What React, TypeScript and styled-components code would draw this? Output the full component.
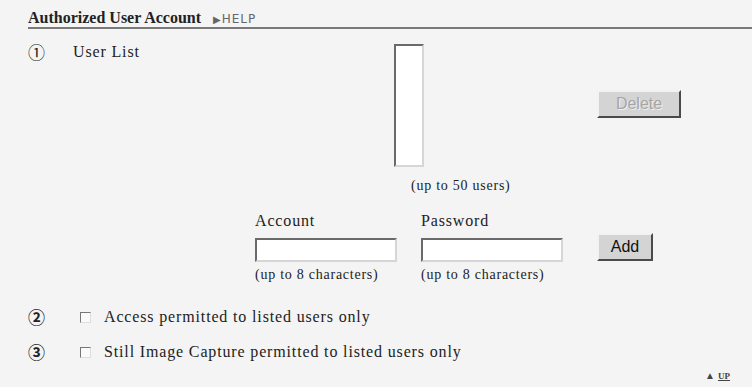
import React from "react";
import styled, { createGlobalStyle } from "styled-components";

const Global = createGlobalStyle`
  html, body { margin: 0; padding: 0; background: #f4f4f4; }
  body { font-family: "Liberation Serif", "Times New Roman", serif; color: #222; }
`;

const Page = styled.div`
  width: 752px;
  height: 387px;
  background: #f4f4f4;
  position: relative;
  overflow: hidden;
`;

const Header = styled.div`
  margin-left: 28px;
  padding-top: 9px;
  height: 18px;
  border-bottom: 2px solid #7a7a7a;
  display: flex;
  align-items: baseline;
  gap: 12px;
`;

const Title = styled.span`
  font-size: 16px;
  font-weight: bold;
  color: #222;
`;

const Help = styled.span`
  font-family: "DejaVu Sans", Verdana, sans-serif;
  font-size: 12px;
  color: #666;
  letter-spacing: 1px;
`;

const HelpArrow = styled.span`
  font-size: 10px;
  margin-right: 0px;
`;

const Row = styled.div<{ $top: number }>`
  display: flex;
  align-items: flex-start;
  margin-top: ${(p) => p.$top}px;
`;

const Num = styled.span<{ $bold?: boolean }>`
  width: 45px;
  height: 16px;
  margin-left: 28px;
  flex: none;
  font-family: "Noto Sans CJK JP", "DejaVu Sans", sans-serif;
  font-weight: ${(p) => (p.$bold ? "bold" : "normal")};
  font-size: 17px;
  line-height: 16px;
  color: #222;
`;

const Label = styled.span<{ $w: number }>`
  width: ${(p) => p.$w}px;
  flex: none;
  font-size: 16px;
  line-height: 16px;
  letter-spacing: 0.85px;
`;

const ListBox = styled.div`
  width: 26px;
  height: 119px;
  background: #fff;
  border-top: 2px solid #6a6a6a;
  border-left: 2px solid #6a6a6a;
  border-right: 2px solid #d6d6d6;
  border-bottom: 2px solid #d6d6d6;
  flex: none;
`;

const Button = styled.button<{ $disabled?: boolean; $w: number }>`
  width: ${(p) => p.$w}px;
  height: 28px;
  flex: none;
  background: #d4d4d4;
  border-top: 2px solid #f2f2f2;
  border-left: 2px solid #f2f2f2;
  border-right: 2px solid #4a4a4a;
  border-bottom: 2px solid #4a4a4a;
  font-family: "Liberation Sans", Arial, sans-serif;
  font-size: 16px;
  color: ${(p) => (p.$disabled ? "#a6a6a6" : "#111")};
  text-shadow: ${(p) => (p.$disabled ? "1px 1px 0 #f0f0f0" : "none")};
  padding: 0;
`;

const Note = styled.div<{ $left: number }>`
  margin-left: ${(p) => p.$left}px;
  font-size: 14px;
  line-height: 14px;
  letter-spacing: 0.75px;
  color: #222;
`;

const FieldCol = styled.div<{ $w: number }>`
  width: ${(p) => p.$w}px;
  flex: none;
  display: flex;
  flex-direction: column;
`;

const FieldLabel = styled.span`
  font-size: 16px;
  line-height: 16px;
  letter-spacing: 0.85px;
  height: 25px;
`;

const TextInput = styled.div`
  width: 138px;
  height: 20px;
  background: #fff;
  border-top: 2px solid #6a6a6a;
  border-left: 2px solid #6a6a6a;
  border-right: 2px solid #d6d6d6;
  border-bottom: 2px solid #d6d6d6;
`;

const SmallNote = styled.span`
  margin-top: 6px;
  font-size: 14px;
  line-height: 14px;
  letter-spacing: 0.75px;
`;

const Check = styled.span`
  width: 9px;
  height: 9px;
  margin: 3px 13px 0 7px;
  flex: none;
  background: #fafafa;
  border-top: 1px solid #777;
  border-left: 1px solid #777;
  border-right: 1px solid #ddd;
  border-bottom: 1px solid #ddd;
`;

const CheckText = styled.span`
  font-size: 16px;
  line-height: 16px;
  letter-spacing: 0.85px;
`;

const UpLink = styled.div`
  position: absolute;
  right: 22px;
  bottom: 6px;
  font-size: 10px;
  color: #444;
  display: flex;
  align-items: center;
  gap: 3px;
`;

const UpText = styled.span`
  text-decoration: underline;
  font-weight: bold;
  font-size: 9px;
`;

export default function App() {
  return (
    <Page>
      <Global />
      <Header>
        <Title>Authorized User Account</Title>
        <Help>
          <HelpArrow>▶</HelpArrow>HELP
        </Help>
      </Header>
      <Row $top={15}>
        <Num>①</Num>
        <Label $w={321}>User List</Label>
        <ListBox />
        <Button $disabled $w={84} style={{ marginLeft: 173, marginTop: 46 }}>
          Delete
        </Button>
      </Row>
      <Note $left={411} style={{ marginTop: 12 }}>(up to 50 users)</Note>
      <Row $top={20}>
        <FieldCol $w={166} style={{ marginLeft: 255 }}>
          <FieldLabel>Account</FieldLabel>
          <TextInput />
          <SmallNote>(up to 8 characters)</SmallNote>
        </FieldCol>
        <FieldCol $w={176}>
          <FieldLabel>Password</FieldLabel>
          <TextInput />
          <SmallNote>(up to 8 characters)</SmallNote>
        </FieldCol>
        <Button $w={56} style={{ marginTop: 20 }}>
          Add
        </Button>
      </Row>
      <Row $top={27}>
        <Num $bold>②</Num>
        <Check />
        <CheckText>Access permitted to listed users only</CheckText>
      </Row>
      <Row $top={19}>
        <Num $bold>③</Num>
        <Check />
        <CheckText>Still Image Capture permitted to listed users only</CheckText>
      </Row>
      <UpLink>
        <span>▲</span>
        <UpText>UP</UpText>
      </UpLink>
    </Page>
  );
}
